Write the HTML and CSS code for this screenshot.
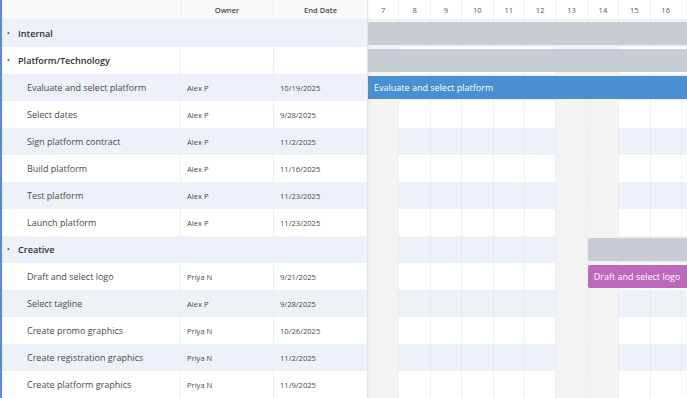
FILE: index.html
```html
<!DOCTYPE html>
<html lang="en">

<head>
    <meta charset="UTF-8">
    <meta name="viewport" content="width=device-width, initial-scale=1.0">
    <title>Project Gantt</title>
    <link rel="stylesheet" href="styles.css">
</head>

<body>

    <div class="gantt">
        <div class="grid">
            <div class="grid-row head">
                <div class="cell name"></div>
                <div class="cell owner">Owner</div>
                <div class="cell date">End Date</div>
            </div>
            <div class="grid-row group alt">
                <div class="cell name"><span class="dot">•</span>Internal</div>
            </div>
            <div class="grid-row group split">
                <div class="cell name"><span class="dot">•</span>Platform/Technology</div>
                <div class="cell owner"></div>
                <div class="cell date"></div>
            </div>
            <div class="grid-row task alt">
                <div class="cell name">Evaluate and select platform</div>
                <div class="cell owner">Alex P</div>
                <div class="cell date">10/19/2025</div>
            </div>
            <div class="grid-row task">
                <div class="cell name">Select dates</div>
                <div class="cell owner">Alex P</div>
                <div class="cell date">9/28/2025</div>
            </div>
            <div class="grid-row task alt">
                <div class="cell name">Sign platform contract</div>
                <div class="cell owner">Alex P</div>
                <div class="cell date">11/2/2025</div>
            </div>
            <div class="grid-row task">
                <div class="cell name">Build platform</div>
                <div class="cell owner">Alex P</div>
                <div class="cell date">11/16/2025</div>
            </div>
            <div class="grid-row task alt">
                <div class="cell name">Test platform</div>
                <div class="cell owner">Alex P</div>
                <div class="cell date">11/23/2025</div>
            </div>
            <div class="grid-row task">
                <div class="cell name">Launch platform</div>
                <div class="cell owner">Alex P</div>
                <div class="cell date">11/23/2025</div>
            </div>
            <div class="grid-row group alt">
                <div class="cell name"><span class="dot">•</span>Creative</div>
            </div>
            <div class="grid-row task">
                <div class="cell name">Draft and select logo</div>
                <div class="cell owner">Priya N</div>
                <div class="cell date">9/21/2025</div>
            </div>
            <div class="grid-row task alt">
                <div class="cell name">Select tagline</div>
                <div class="cell owner">Alex P</div>
                <div class="cell date">9/28/2025</div>
            </div>
            <div class="grid-row task">
                <div class="cell name">Create promo graphics</div>
                <div class="cell owner">Priya N</div>
                <div class="cell date">10/26/2025</div>
            </div>
            <div class="grid-row task alt">
                <div class="cell name">Create registration graphics</div>
                <div class="cell owner">Priya N</div>
                <div class="cell date">11/2/2025</div>
            </div>
            <div class="grid-row task">
                <div class="cell name">Create platform graphics</div>
                <div class="cell owner">Priya N</div>
                <div class="cell date">11/9/2025</div>
            </div>
        </div>

        <div class="chart">
            <div class="chart-row head">
                <div class="day">7</div>
                <div class="day">8</div>
                <div class="day">9</div>
                <div class="day">10</div>
                <div class="day">11</div>
                <div class="day">12</div>
                <div class="day">13</div>
                <div class="day">14</div>
                <div class="day">15</div>
                <div class="day">16</div>
                <div class="day"></div>
            </div>
        </div>
    </div>

    <script>
        const rows = [
            { alt: true, bar: { from: 1, kind: 'summary' } },
            { alt: false, bar: { from: 1, kind: 'summary' } },
            { alt: true, bar: { from: 1, kind: 'blue', label: 'Evaluate and select platform' } },
            { alt: false },
            { alt: true },
            { alt: false },
            { alt: true },
            { alt: false },
            { alt: true, bar: { from: 8, kind: 'summary' } },
            { alt: false, bar: { from: 8, kind: 'purple', label: 'Draft and select logo' } },
            { alt: true },
            { alt: false },
            { alt: true },
            { alt: false }
        ];
        const weekends = [1, 7, 8];
        const chart = document.querySelector('.chart');

        rows.forEach(r => {
            const row = document.createElement('div');
            row.className = 'chart-row' + (r.alt ? ' alt' : '');
            for (let i = 1; i <= 11; i++) {
                const c = document.createElement('div');
                c.className = 'slot' + (weekends.includes(i) ? ' weekend' : '');
                c.style.gridColumn = i;
                row.appendChild(c);
            }
            if (r.bar) {
                const b = document.createElement('div');
                b.className = 'bar ' + r.bar.kind;
                b.style.gridColumn = r.bar.from + ' / -1';
                b.textContent = r.bar.label || '';
                row.appendChild(b);
            }
            chart.appendChild(row);
        });
    </script>

</body>

</html>
```

FILE: styles.css
```css
* {
    margin: 0;
    padding: 0;
    box-sizing: border-box;
}

body {
    width: 687px;
    height: 398px;
    overflow: hidden;
    background-color: white;
    font-family: "Open Sans", "Noto Sans", sans-serif;
    color: #4a4a4a;
}

.gantt {
    display: flex;
    height: 398px;
    border-left: 2px solid #5b86e5;
}

.grid {
    width: 366px;
    flex-shrink: 0;
    border-right: 1px solid #e2e4e8;
    box-shadow: 1px 0 2px rgba(0, 0, 0, 0.06);
    position: relative;
    z-index: 1;
}

.grid-row {
    display: grid;
    grid-template-columns: 179px 93px 93px;
    height: 27px;
    background-color: white;
}

.grid-row.alt {
    background-color: #edf2f9;
}

.grid-row .cell {
    display: flex;
    align-items: center;
    border-right: 1px solid #eceef1;
    white-space: nowrap;
}

.grid-row .cell:last-child {
    border-right: none;
}

.grid-row.head {
    height: 20px;
    background-color: #fafafa;
    border-bottom: 1px solid #eef0f3;
}

.grid-row.head .cell {
    justify-content: center;
    font-size: 7.6px;
    font-weight: 600;
    color: #4a4a4a;
}

.grid-row.group .cell.name {
    grid-column: 1 / -1;
    border-right: none;
    font-size: 9.1px;
    font-weight: 600;
    color: #2f2f2f;
    padding-left: 5px;
}

.grid-row.group.split .cell.name {
    grid-column: auto;
    border-right: 1px solid #eceef1;
}

.dot {
    font-size: 7px;
    width: 11px;
    color: #444;
}

.grid-row.task .cell.name {
    padding-left: 25px;
    font-size: 9px;
    color: #4a4a4a;
}

.grid-row.task .cell.owner,
.grid-row.task .cell.date {
    padding-left: 6px;
    font-size: 7.6px;
    color: #4a4a4a;
}

.chart {
    flex: 1;
    overflow: hidden;
}

.chart-row {
    display: grid;
    grid-template-columns: repeat(11, 31.4px);
    height: 27px;
    background-color: white;
}

.chart-row.alt {
    background-color: #edf2f9;
}

.chart-row.head {
    height: 20px;
    border-bottom: 1px solid #eef0f3;
}

.day {
    display: flex;
    align-items: center;
    justify-content: center;
    font-size: 7.6px;
    color: #5a5a5a;
    border-right: 1px solid #eef0f3;
}

.slot {
    grid-row: 1;
    border-right: 1px solid #eef0f3;
}

.chart-row.alt .slot {
    border-right-color: #e6ebf2;
}

.slot.weekend {
    background-color: #f3f3f3;
}

.bar {
    grid-row: 1;
    margin: 2px 0;
    border-radius: 2px;
    display: flex;
    align-items: center;
    padding-left: 6px;
    font-size: 9px;
    color: white;
    white-space: nowrap;
    overflow: hidden;
    z-index: 1;
}

.bar.summary {
    background-color: #c8cdd4;
}

.bar.blue {
    background-color: #4a8fd1;
    border-radius: 0;
}

.bar.purple {
    background-color: #bd67bd;
}
```
